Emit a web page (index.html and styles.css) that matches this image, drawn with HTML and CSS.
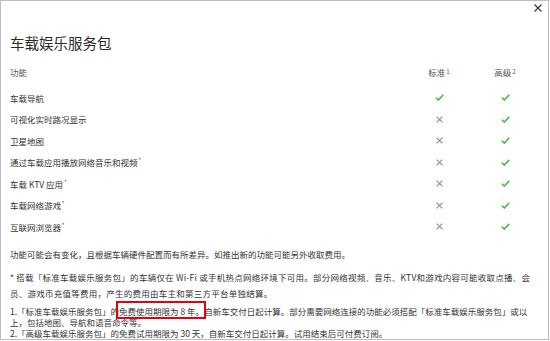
FILE: index.html
```html
<!DOCTYPE html>
<html lang="zh-CN">
<head>
<meta charset="utf-8">
<title>车载娱乐服务包</title>
<link rel="stylesheet" href="styles.css">
</head>
<body>
<div class="dialog">
  <button class="close" aria-label="关闭">
    <svg width="8" height="8" viewBox="0 0 8 8"><path d="M0.5 0.5 L7.5 7.5 M7.5 0.5 L0.5 7.5" stroke="#333" stroke-width="1.1" fill="none"/></svg>
  </button>
  <h1 class="title">车载娱乐服务包</h1>
  <div class="table">
    <div class="row head">
      <div class="name">功能</div>
      <div class="col">标准<sup class="num">1</sup></div>
      <div class="col">高级<sup class="num">2</sup></div>
    </div>
    <div class="row">
      <div class="name">车载导航</div>
      <div class="col"><svg class="ok" width="9" height="7" viewBox="0 0 9 7"><path d="M0.8 3.6 L3.3 6 L8.3 0.8"/></svg></div>
      <div class="col"><svg class="ok" width="9" height="7" viewBox="0 0 9 7"><path d="M0.8 3.6 L3.3 6 L8.3 0.8"/></svg></div>
    </div>
    <div class="row">
      <div class="name">可视化实时路况显示</div>
      <div class="col"><svg class="no" width="7" height="7" viewBox="0 0 7 7"><path d="M0.6 0.6 L6.4 6.4 M6.4 0.6 L0.6 6.4"/></svg></div>
      <div class="col"><svg class="ok" width="9" height="7" viewBox="0 0 9 7"><path d="M0.8 3.6 L3.3 6 L8.3 0.8"/></svg></div>
    </div>
    <div class="row">
      <div class="name">卫星地图</div>
      <div class="col"><svg class="no" width="7" height="7" viewBox="0 0 7 7"><path d="M0.6 0.6 L6.4 6.4 M6.4 0.6 L0.6 6.4"/></svg></div>
      <div class="col"><svg class="ok" width="9" height="7" viewBox="0 0 9 7"><path d="M0.8 3.6 L3.3 6 L8.3 0.8"/></svg></div>
    </div>
    <div class="row">
      <div class="name">通过车载应用播放网络音乐和视频<sup class="star">*</sup></div>
      <div class="col"><svg class="no" width="7" height="7" viewBox="0 0 7 7"><path d="M0.6 0.6 L6.4 6.4 M6.4 0.6 L0.6 6.4"/></svg></div>
      <div class="col"><svg class="ok" width="9" height="7" viewBox="0 0 9 7"><path d="M0.8 3.6 L3.3 6 L8.3 0.8"/></svg></div>
    </div>
    <div class="row">
      <div class="name">车载 KTV 应用<sup class="star">*</sup></div>
      <div class="col"><svg class="no" width="7" height="7" viewBox="0 0 7 7"><path d="M0.6 0.6 L6.4 6.4 M6.4 0.6 L0.6 6.4"/></svg></div>
      <div class="col"><svg class="ok" width="9" height="7" viewBox="0 0 9 7"><path d="M0.8 3.6 L3.3 6 L8.3 0.8"/></svg></div>
    </div>
    <div class="row">
      <div class="name">车载网络游戏<sup class="star">*</sup></div>
      <div class="col"><svg class="no" width="7" height="7" viewBox="0 0 7 7"><path d="M0.6 0.6 L6.4 6.4 M6.4 0.6 L0.6 6.4"/></svg></div>
      <div class="col"><svg class="ok" width="9" height="7" viewBox="0 0 9 7"><path d="M0.8 3.6 L3.3 6 L8.3 0.8"/></svg></div>
    </div>
    <div class="row">
      <div class="name">互联网浏览器<sup class="star">*</sup></div>
      <div class="col"><svg class="no" width="7" height="7" viewBox="0 0 7 7"><path d="M0.6 0.6 L6.4 6.4 M6.4 0.6 L0.6 6.4"/></svg></div>
      <div class="col"><svg class="ok" width="9" height="7" viewBox="0 0 9 7"><path d="M0.8 3.6 L3.3 6 L8.3 0.8"/></svg></div>
    </div>
  </div>
  <p class="note">功能可能会有变化，且根据车辆硬件配置而有所差异。如推出新的功能可能另外收取费用。</p>
  <p class="foot">* 搭载「标准车载娱乐服务包」的车辆仅在 Wi-Fi 或手机热点网络环境下可用。部分网络视频、音乐、KTV和游戏内容可能收取点播、会<br>员、游戏币充值等费用，产生的费用由车主和第三方平台单独结算。</p>
  <ol class="list">
    <li>1.「标准车载娱乐服务包」的<span class="mark">免费使用期限为 8 年。</span>自新车交付日起计算。部分需要网络连接的功能必须搭配「标准车载娱乐服务包」或以<br>上，包括地图、导航和语音命令等。</li>
    <li>2.「高级车载娱乐服务包」的免费试用期限为 30 天，自新车交付日起计算。试用结束后可付费订阅。</li>
  </ol>
</div>
</body>
</html>
```

FILE: styles.css
```css
html, body {
  margin: 0;
  padding: 0;
  background: #fff;
}
body {
  font-family: "Noto Sans CJK SC", "Noto Sans", sans-serif;
  color: #333;
}
.dialog {
  position: relative;
  box-sizing: border-box;
  width: 549px;
  height: 340px;
  border: 1px solid #bdbdbd;
  padding: 32px 10px 0 9px;
  overflow: hidden;
}
.close {
  position: absolute;
  top: 3px;
  right: 6px;
  padding: 0;
  margin: 0;
  border: 0;
  background: none;
  width: 8px;
  height: 8px;
  display: block;
}
.close svg { display: block; }
.title {
  margin: 0;
  font-size: 14.5px;
  line-height: 20px;
  font-weight: 400;
  color: #2b2b2b;
}
.table {
  margin-top: 8px;
  display: flex;
  flex-direction: column;
}
.row {
  display: grid;
  grid-template-columns: 1fr 66px 66px;
  height: 21.5px;
  align-items: center;
  font-size: 8.5px;
  line-height: 12px;
}
.row.head {
  margin-bottom: 4.5px;
  color: #555;
}
.col {
  display: flex;
  justify-content: center;
  align-items: center;
}
.name { white-space: nowrap; }
.num {
  font-size: 6px;
  line-height: 0;
  vertical-align: 4px;
  margin-left: 1px;
}
.star {
  font-size: 5px;
  line-height: 0;
  vertical-align: 4px;
  margin-left: 1px;
}
.ok path {
  fill: none;
  stroke: #2bb32b;
  stroke-width: 1.3;
}
.no path {
  fill: none;
  stroke: #8c8c8c;
  stroke-width: 1.1;
}
.note {
  margin: 9px 0 0;
  font-size: 8.5px;
  line-height: 14px;
  white-space: nowrap;
}
.foot {
  margin: 8px 0 0;
  font-size: 8.5px;
  line-height: 16px;
  letter-spacing: 0.25px;
  white-space: nowrap;
}
.list {
  list-style: none;
  margin: 5.5px 0 0;
  padding: 0;
  font-size: 8.5px;
  line-height: 11px;
  white-space: nowrap;
}
.mark {
  position: relative;
}
.mark::after {
  content: "";
  position: absolute;
  left: -3px;
  right: -2px;
  top: -4px;
  bottom: -2px;
  border: 2px solid #e8000b;
}
```
